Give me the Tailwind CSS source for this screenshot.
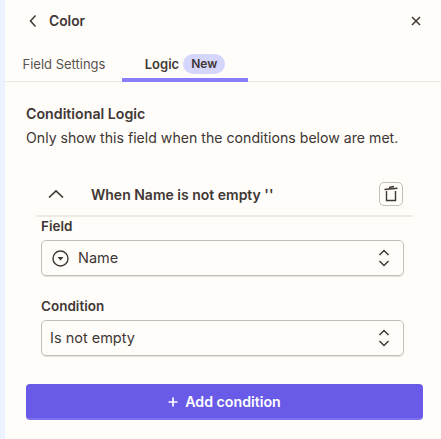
<!DOCTYPE html>
<html lang="en">

<head>
    <meta charset="utf-8" />
    <title>Color</title>
    <script src="https://cdn.jsdelivr.net/npm/@tailwindcss/browser@4"></script>
</head>

<body class="bg-[#fffdf9] font-['Inter',sans-serif] text-[#403735] overflow-hidden">
    <div class="flex h-[439px] w-[441px]">
        <div class="w-[5px] shrink-0 bg-[#edf3fe]"></div>
        <div class="flex-1 min-w-0">
            <!-- Header -->
            <div class="flex items-center h-[42px] pl-[22px] pr-[19px]">
                <svg class="w-[12px] h-[16px] mr-[10px]" viewBox="0 0 12 16" fill="none" stroke="#403735" stroke-width="1.5">
                    <path d="M8.500 2.500 L3.500 8 L8.500 13.500" />
                </svg>
                <span class="text-[13.800px] font-semibold">Color</span>
                <svg class="ml-auto w-[12px] h-[12px]" viewBox="0 0 12 12" fill="none" stroke="#403735" stroke-width="1.500">
                    <path d="M2 2 L10 10 M10 2 L2 10" />
                </svg>
            </div>

            <!-- Tabs -->
            <div class="flex h-[40px] border-b border-[#eeebe6]">
                <div class="w-[117px] pl-[17.5px] pt-[12px] text-[13px] leading-[20px] text-[#5a5250]">Field Settings</div>
                <div class="w-[126px] h-[40px] border-b-[4px] border-[#8a7dfa] flex items-start justify-center gap-[4px] pt-[12px]">
                    <span class="text-[13px] leading-[20px] font-semibold">Logic</span>
                    <span class="bg-[#d5d6fb] rounded-full px-[8px] h-[20px] text-[12px] leading-[20px] font-semibold">New</span>
                </div>
            </div>

            <!-- Body -->
            <div class="pl-[21px] pr-[18px] pt-[22px]">
                <h2 class="text-[14.200px] leading-[20px] font-semibold">Conditional Logic</h2>
                <p class="mt-[4px] text-[14.130px] leading-[20px]">Only show this field when the conditions below are met.</p>

                <div class="ml-[10px] mr-[10px] mt-[21px]">
                    <div class="flex items-center h-[48px] pt-[4px] border-b-2 border-[#eeebe0]">
                        <svg class="ml-[12px] w-[16px] h-[10px]" viewBox="0 0 16 10" fill="none" stroke="#403735" stroke-width="1.700">
                            <path d="M1 8.500 L8 2 L15 8.500" />
                        </svg>
                        <span class="ml-[27px] text-[14px] font-semibold">When Name is not empty ''</span>
                        <div class="ml-auto mr-[10px] w-[24px] h-[24px] rounded-[5px] border border-[#c4bfb8] flex items-center justify-center">
                            <svg class="w-[16px] h-[18px]" viewBox="0 0 16 18" fill="none" stroke="#403735" stroke-width="1.400">
                                <path d="M1.500 4.500 L14.500 3.200 M6 2.500 L11 1.500" />
                                <path d="M3.500 6 V15.500 H12.500 V6" />
                            </svg>
                        </div>
                    </div>

                    <div class="pl-[5px] pr-[9px]">
                        <label class="block text-[13.500px] leading-[18px] font-semibold">Field</label>
                        <div class="mt-[5px] flex items-center h-[36px] rounded-[5px] border border-[#c4bfb8] shadow-[0_1px_0_#e5e2dc] pl-[10px] pr-[13px]">
                            <svg class="w-[17px] h-[17px]" viewBox="0 0 17 17" fill="none" stroke="#403735" stroke-width="1.400">
                                <circle cx="8.500" cy="8.500" r="7.500" />
                                <path d="M5.500 7 H11.500 L8.500 10.500 Z" fill="#403735" stroke="none" />
                            </svg>
                            <span class="ml-[9px] text-[14.500px]">Name</span>
                            <svg class="ml-auto w-[12px] h-[18px]" viewBox="0 0 12 18" fill="none" stroke="#403735" stroke-width="1.500">
                                <path d="M1.500 6 L6 1.500 L10.500 6 M1.500 12 L6 16.500 L10.500 12" />
                            </svg>
                        </div>

                        <label class="block mt-[21px] text-[13.500px] leading-[18px] font-semibold">Condition</label>
                        <div class="mt-[5px] flex items-center h-[36px] rounded-[5px] border border-[#c4bfb8] shadow-[0_1px_0_#e5e2dc] pl-[8px] pr-[13px]">
                            <span class="text-[14.500px]">Is not empty</span>
                            <svg class="ml-auto w-[12px] h-[18px]" viewBox="0 0 12 18" fill="none" stroke="#403735" stroke-width="1.500">
                                <path d="M1.500 6 L6 1.500 L10.500 6 M1.500 12 L6 16.500 L10.500 12" />
                            </svg>
                        </div>
                    </div>
                </div>

                <button class="mt-[28px] w-[397px] h-[36px] pt-[2px] rounded-[4px] bg-[#695be8] border-b-2 border-[#7f72f0] text-white text-[14.200px] font-semibold flex items-center justify-center gap-[7px]">
                    <svg class="w-[10px] h-[10px]" viewBox="0 0 10 10" fill="none" stroke="#ffffff" stroke-width="1.700">
                        <path d="M5 0.500 V9.500 M0.500 5 H9.500" />
                    </svg>
                    Add condition
                </button>
            </div>
        </div>
    </div>
</body>

</html>
